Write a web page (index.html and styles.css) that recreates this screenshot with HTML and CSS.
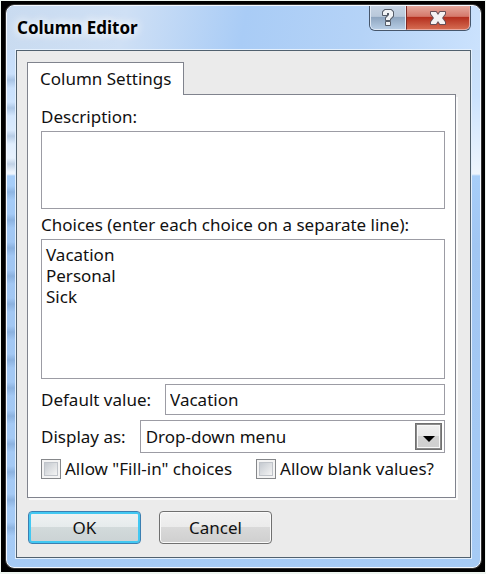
FILE: index.html
```html
<!DOCTYPE html>
<html lang="en">
<head>
<meta charset="utf-8">
<meta name="viewport" content="width=device-width, initial-scale=1">
<title>Column Editor</title>
<link rel="stylesheet" href="styles.css">
</head>
<body>
<div class="backdrop">
<main class="window">
  <header class="titlebar">
    <h1 class="title">Column Editor</h1>
    <div class="caption-buttons">
      <button class="caption help" type="button" aria-label="Help">
        <svg width="14" height="18" viewBox="0 0 14 18" aria-hidden="true">
          <path d="M2 3L4 1H10L12 3V7L9 10V11H5V9L8 6V4H6V6H2ZM5 13H9V16H5Z" fill="#f1f3f6" stroke="#565d69" stroke-width="2" stroke-linejoin="round" paint-order="stroke"/>
        </svg>
      </button>
      <button class="caption close" type="button" aria-label="Close">
        <svg width="18" height="16" viewBox="0 0 18 16" aria-hidden="true">
          <path d="M2 2H7L9 5L11 2H16V4L13 8L16 12V14H11L9 11L7 14H2V12L5 8L2 4Z" fill="#f5f3f3" stroke="#665058" stroke-width="2" stroke-linejoin="round" paint-order="stroke"/>
        </svg>
      </button>
    </div>
  </header>
  <form class="client">
    <div class="tabs" role="tablist">
      <button class="tab" type="button" role="tab" id="tab-settings" aria-selected="true" aria-controls="settings">Column Settings</button>
      <div class="tab-rule"></div>
    </div>
    <section class="panel" id="settings" role="tabpanel" aria-labelledby="tab-settings">
      <label class="caption-label" for="description">Description:</label>
      <textarea class="field description" id="description"></textarea>
      <label class="caption-label choices-label" for="choices">Choices (enter each choice on a separate line):</label>
      <textarea class="field choices" id="choices">Vacation
Personal
Sick</textarea>
      <div class="row">
        <label for="default-value">Default value:</label>
        <input class="field default-value" id="default-value" type="text" value="Vacation">
      </div>
      <div class="row">
        <label for="display-as">Display as:</label>
        <div class="select-box">
          <select class="field display-as" id="display-as"><option>Drop-down menu</option></select>
          <span class="arrow"><svg width="12" height="6" viewBox="0 0 12 6" aria-hidden="true"><path d="M0 0H12L6 6Z" fill="#000"/></svg></span>
        </div>
      </div>
      <div class="checks">
        <label class="check"><input type="checkbox">Allow "Fill-in" choices</label>
        <label class="check"><input type="checkbox">Allow blank values?</label>
      </div>
    </section>
    <div class="actions">
      <button class="action ok" type="submit">OK</button>
      <button class="action" type="button">Cancel</button>
    </div>
  </form>
</main>
</div>
</body>
</html>
```
FILE: styles.css
```css
* {
  box-sizing: border-box;
}

body {
  margin: 0;
  padding: 1px;
  background: #eef5f0;
  color: #111;
  font: 17px/20px "Noto Sans", "Open Sans", sans-serif;
}

button, input, select, textarea {
  margin: 0;
  color: inherit;
  font: inherit;
}

.backdrop {
  padding: 4px 4px 4px 5px;
  background: #000;
}

.window {
  padding: 0 9px 9px;
  border: 1px solid #f4f9ff;
  border-radius: 8px;
  background:
    repeating-linear-gradient(180deg, transparent 0, transparent 8px, rgba(70, 110, 160, 0.25) 14px, transparent 22px, transparent 28px) left 60px / 9px 470px no-repeat,
    linear-gradient(180deg, #bdd4f1 0, #c7ddf8 40px, #cbe2fd 90px, #eef5fd 168px, #a7cef9 170px, #a1c6f2 240px, #a6cbf5 100%);
  box-shadow: 0 0 0 1px #333;
}

.titlebar {
  display: flex;
  justify-content: space-between;
  align-items: flex-start;
  height: 44px;
  margin: 0 -9px;
  padding: 0 9px 0 10px;
  border-radius: 7px 7px 0 0;
  background: linear-gradient(100deg, #c9dbf0 0, #cfe0f5 25%, #a9ccf6 50%, #b5d3f7 75%, #cbe2fd 100%);
}

.title {
  margin: 12px 0 0;
  font-size: 17px;
  line-height: 20px;
  font-weight: 700;
  color: #000;
  text-shadow: 0 0 8px #fff, 0 0 12px #fff;
}

.caption-buttons {
  display: flex;
  height: 25px;
  border: 1px solid #46566b;
  border-top: 0;
  border-radius: 0 0 6px 6px;
  overflow: hidden;
}

.caption {
  display: flex;
  align-items: center;
  justify-content: center;
  padding: 0;
  border: 1px solid #e1eaf5;
  border-top: 0;
}

.help {
  width: 36px;
  border-radius: 0 0 0 5px;
  background: linear-gradient(#c6d4e4 0, #b9c8da 45%, #8fa6c0 50%, #b6cce4 100%);
}

.close {
  width: 64px;
  border-color: #eaa79d;
  border-left: 1px solid #7d2a25;
  border-radius: 0 0 5px 0;
  background: linear-gradient(#e5a99d 0, #d5796b 45%, #b5301f 50%, #d46a50 100%);
}

.client {
  padding: 11px 14px 13px 10px;
  border: 1px solid #51616f;
  background: #ebebeb;
  box-shadow: 0 0 0 1px #e4f0fd;
}

.tabs {
  display: flex;
  align-items: stretch;
}

.tab {
  height: 33px;
  padding: 0 12px;
  border: 1px solid #80838d;
  border-bottom: 0;
  background: #fff;
}

.tab-rule {
  flex: 1;
  border-bottom: 1px solid #80838d;
}

.panel {
  display: flex;
  flex-direction: column;
  padding: 12px 10px 18px 13px;
  border: 1px solid #80838d;
  border-top: 0;
  background: #fff;
  box-shadow: 2px 2px 0 #fafafa;
}

.caption-label {
  margin-bottom: 4px;
}

.choices-label {
  margin-top: 6px;
}

.field {
  display: block;
  width: 100%;
  padding: 4px;
  border: 1px solid #9c9ca4;
  border-radius: 0;
  outline: 0;
  background: #fff;
  resize: none;
}

.description {
  height: 78px;
}

.choices {
  height: 140px;
  line-height: 21px;
}

.row {
  display: flex;
  align-items: center;
  gap: 14px;
  margin-top: 5px;
  white-space: nowrap;
}

.default-value {
  flex: 1;
  min-width: 0;
  height: 31px;
}

.select-box {
  position: relative;
  flex: 1;
}

.display-as {
  height: 33px;
  padding: 0 32px 0 5px;
  appearance: none;
}

.arrow {
  position: absolute;
  top: 3px;
  right: 3px;
  bottom: 3px;
  display: flex;
  align-items: center;
  justify-content: center;
  width: 27px;
  padding-top: 4px;
  border: 1px solid #707070;
  background: linear-gradient(#f0f0f0 0, #e8e8e8 50%, #d2d2d2 50%, #cfcfcf 100%);
  box-shadow: inset 0 0 0 1px #8a8a8a, inset 0 0 0 2px #f8f8f8;
  pointer-events: none;
}

.checks {
  display: flex;
  gap: 24px;
  margin-top: 6px;
  white-space: nowrap;
}

.check {
  display: flex;
  align-items: center;
  gap: 4px;
}

.check input {
  width: 20px;
  height: 20px;
  border: 1px solid #85878a;
  appearance: none;
  background: linear-gradient(135deg, #c5cad0, #f4f4f4) content-box;
  padding: 3px;
  box-shadow: inset 0 0 0 2px #f4f4f4, inset 0 0 0 3px #c0c4ca;
}

.actions {
  display: flex;
  gap: 18px;
  margin: 13px 0 0 1px;
}

.action {
  width: 113px;
  height: 33px;
  padding: 0;
  border: 1px solid #707070;
  border-radius: 4px;
  background: linear-gradient(#f2f2f2 0, #ebebeb 48%, #d9d9d9 50%, #cfcfcf 100%);
  box-shadow: inset 0 0 0 1px #fafafa;
}

.ok {
  border-color: #3c7fb1;
  background: linear-gradient(#f0f3f4 0, #e6ebec 48%, #d2dadb 50%, #cbd2d4 100%);
  box-shadow: inset 0 0 0 2px #42c8f2;
}
```
